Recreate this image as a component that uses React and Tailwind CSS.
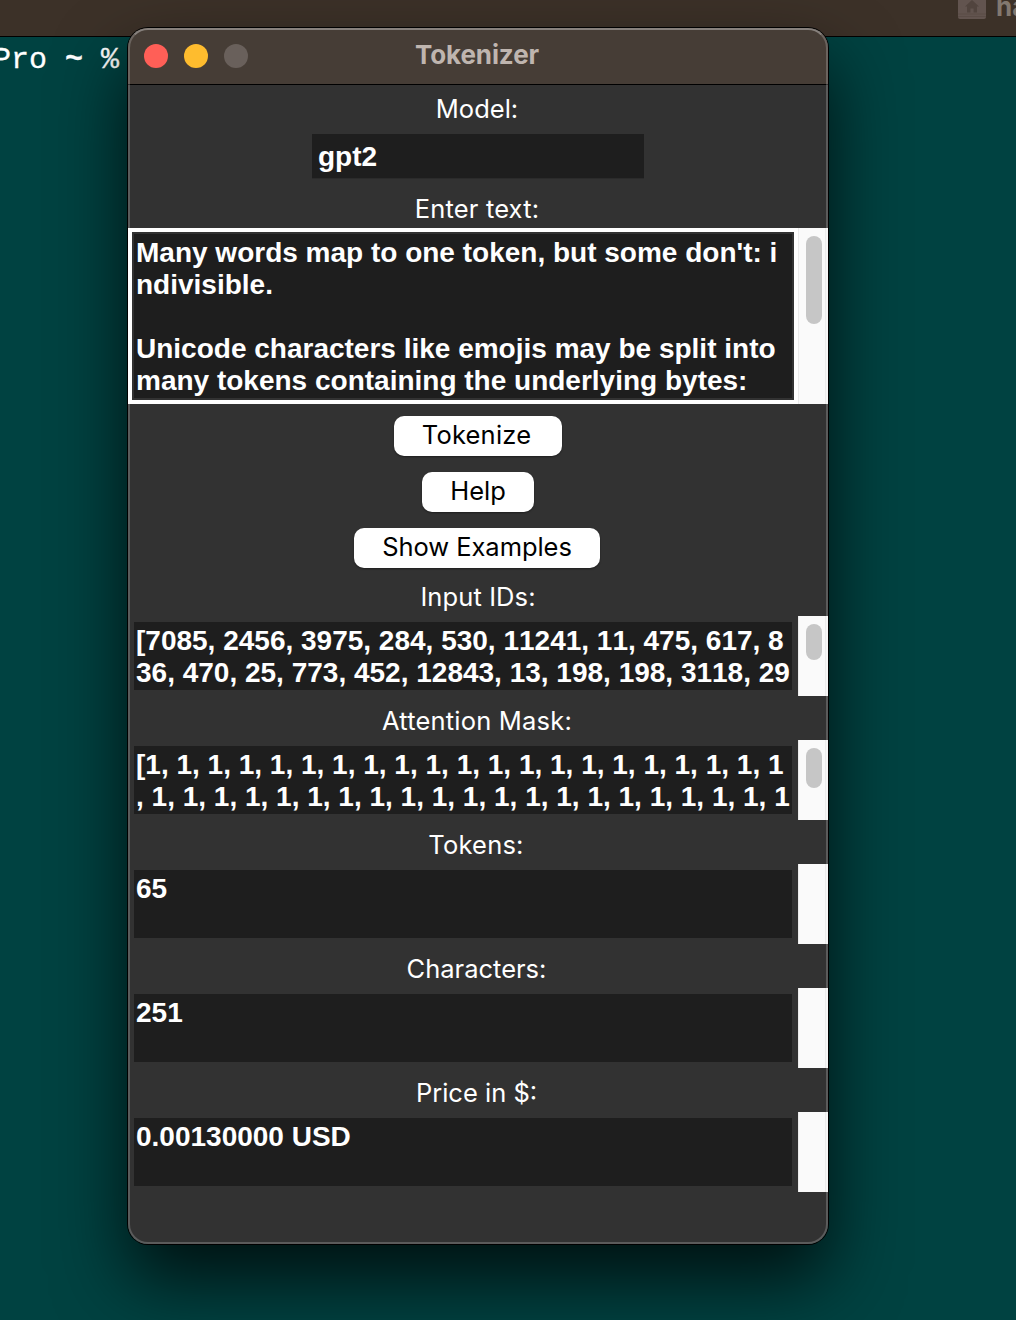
import React from "react";

function Label({ children, className }) {
  return (
    <div
      className={`flex items-center justify-center whitespace-pre font-['Inter',sans-serif] text-[25.5px] text-white ${className}`}
    >
      {children}
    </div>
  );
}

function Lines({ lines }) {
  return lines.map((line, i) => (
    <div key={i} className="h-8 whitespace-pre leading-8">
      {line}
    </div>
  ));
}

function Scrollbar({ thumb }) {
  return (
    <div className="flex w-[30px] shrink-0 border-l border-[#ebebeb] bg-[#fafafa]">
      <div className="flex w-[26px] pt-2 pl-[7px]">
        {thumb && <div className={`w-4 rounded-full bg-[#c6c6c6] ${thumb}`} />}
      </div>
      <div className="grow border-l border-[#ececec] bg-[#f5f5f5]" />
    </div>
  );
}

function Output({ lines, thumb }) {
  return (
    <div className="flex h-20">
      <div className="m-1.5 grow overflow-hidden bg-[#1e1e1e] px-0.5 pt-[3px] font-['Liberation_Sans',sans-serif] text-[28px] font-bold text-white [font-kerning:none]">
        <Lines lines={lines} />
      </div>
      <Scrollbar thumb={thumb} />
    </div>
  );
}

function PushButton({ children, className }) {
  return (
    <button
      className={`flex h-10 items-center justify-center whitespace-pre rounded-[10px] bg-white pb-[2px] font-['Inter',sans-serif] text-[25.5px] text-black shadow-[0_1px_2px_rgba(0,0,0,0.4)] ${className}`}
    >
      {children}
    </button>
  );
}

const enteredText = [
  "Many words map to one token, but some don't: i",
  "ndivisible.",
  "",
  "Unicode characters like emojis may be split into",
  "many tokens containing the underlying bytes:",
];

const inputIds = [
  "[7085, 2456, 3975, 284, 530, 11241, 11, 475, 617, 8",
  "36, 470, 25, 773, 452, 12843, 13, 198, 198, 3118, 29",
];

const attentionMask = [
  "[1, 1, 1, 1, 1, 1, 1, 1, 1, 1, 1, 1, 1, 1, 1, 1, 1, 1, 1, 1, 1",
  ", 1, 1, 1, 1, 1, 1, 1, 1, 1, 1, 1, 1, 1, 1, 1, 1, 1, 1, 1, 1, 1",
];

function Tokenizer() {
  return (
    <div className="absolute top-7 left-32 h-[1216px] w-[700px] rounded-[20px] shadow-[0_0_0_1px_#000,0_36px_72px_0px_rgba(0,0,0,0.75)]">
      <div className="flex h-full flex-col overflow-hidden rounded-[20px] bg-[#323232]">
        <div className="grid h-[57px] shrink-0 grid-cols-[1fr_auto_1fr] items-center border-b border-black bg-[#463d36]">
          <div className="flex gap-4 pl-4">
            <span className="size-6 rounded-full bg-[#ff5f57]" />
            <span className="size-6 rounded-full bg-[#febc2e]" />
            <span className="size-6 rounded-full bg-[#69605b]" />
          </div>
          <div className="pr-[2px] pb-1 font-['Inter',sans-serif] text-[26px] font-bold tracking-[-0.1px] text-[#bfb5af]">
            Tokenizer
          </div>
        </div>
        <Label className="h-[49px] pr-[2px]">Model:</Label>
        <div className="mx-auto flex h-[45px] w-[332px] shrink-0 items-center border-b border-[#2b2b2b] bg-[#1e1e1e] pt-0.5 pl-1.5 font-['Liberation_Sans',sans-serif] text-[28px] font-bold text-white">
          gpt2
        </div>
        <Label className="h-[49px] pt-[11px] pr-0.5 tracking-[0.15px]">Enter text:</Label>
        <div className="flex h-44 shrink-0">
          <div className="grow border-4 border-white">
            <div className="h-full overflow-hidden border-2 border-[#323232] bg-[#1e1e1e] px-0.5 pt-[3px] font-['Liberation_Sans',sans-serif] text-[28px] font-bold text-white">
              <Lines lines={enteredText} />
            </div>
          </div>
          <Scrollbar thumb="h-[88px]" />
        </div>
        <div className="flex flex-col items-center gap-4 pt-3">
          <PushButton className="w-[168px] pr-[3px] pl-0 tracking-[0.2px]">Tokenize</PushButton>
          <PushButton className="w-28">Help</PushButton>
          <PushButton className="mr-0.5 w-[246px] tracking-[-0.05px]">Show Examples</PushButton>
        </div>
        <Label className="h-12 pt-[11px] tracking-[0.1px]">Input IDs:</Label>
        <Output lines={inputIds} thumb="h-9" />
        <Label className="h-11 pt-[7px] pr-0.5 tracking-[0.2px]">Attention Mask:</Label>
        <Output lines={attentionMask} thumb="h-10" />
        <Label className="h-11 pt-[7px] pr-1 tracking-[0.2px]">Tokens:</Label>
        <Output lines={["65"]} />
        <Label className="h-11 pt-[7px] pr-[3px]">Characters:</Label>
        <Output lines={["251"]} />
        <Label className="h-11 pt-[7px] pr-[3px]">Price in $:</Label>
        <Output lines={["0.00130000 USD"]} />
      </div>
      <div className="pointer-events-none absolute inset-0 rounded-[20px] border-2 border-white/20 border-t-white/35" />
    </div>
  );
}

export default function App() {
  return (
    <div className="relative flex h-[1320px] w-[1016px] flex-col overflow-hidden bg-[#004241]">
      <div className="flex h-[37px] shrink-0 justify-end overflow-hidden border-b border-black bg-[#3c3128]">
        <svg className="-mt-[5px] mr-[10px] h-6 w-7 shrink-0" viewBox="0 0 28 24">
          <rect width="28" height="24" rx="2" fill="#62544f" />
          <path d="M0 19h28M0 21.5h28" stroke="#5a4c46" strokeWidth="1" />
          <path
            d="M14 5l7 6.500h-2v6h-3.400v-4h-3.200v4h-3.400v-6h-2z"
            fill="#51443e"
          />
        </svg>
        <div className="-mt-[13px] w-5 shrink-0 whitespace-nowrap font-['Inter',sans-serif] text-[26px] font-bold text-[#82786f]">
          ha
        </div>
      </div>
      <div className="-ml-[7px] mt-[5px] whitespace-pre font-['Liberation_Mono',monospace] text-[30px] leading-9 text-white [-webkit-text-stroke:0.3px_white]">
        Pro <span className="font-bold">~</span> %
      </div>
      <Tokenizer />
    </div>
  );
}
